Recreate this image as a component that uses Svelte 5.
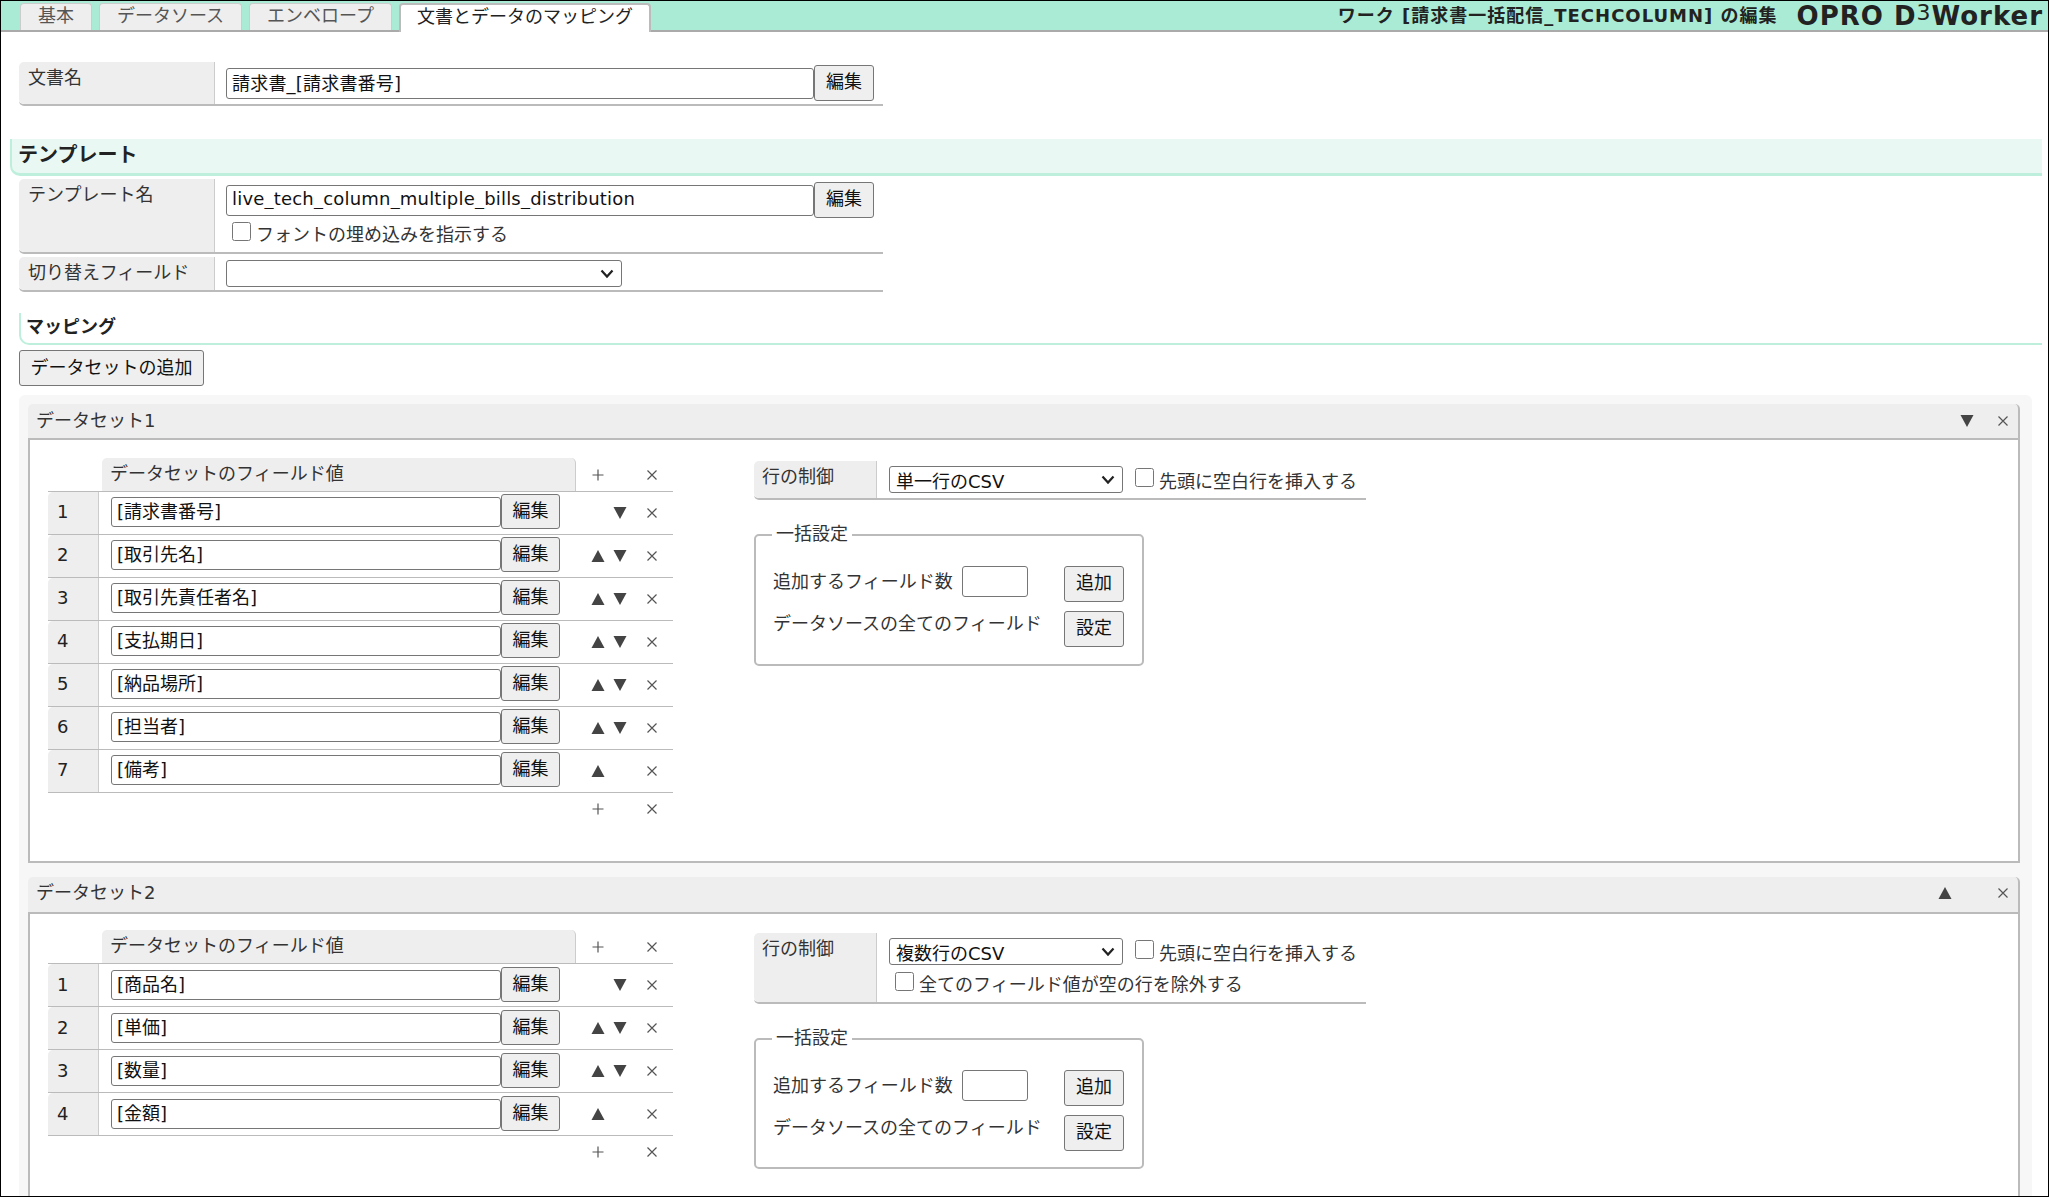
<script>
  const tabs = ['基本', 'データソース', 'エンベロープ', '文書とデータのマッピング'];
  const datasets = [
    { name: 'データセット1', cls: 'first', open: true, mode: '単一行のCSV', fields: ['[請求書番号]', '[取引先名]', '[取引先責任者名]', '[支払期日]', '[納品場所]', '[担当者]', '[備考]'] },
    { name: 'データセット2', cls: 'second', open: false, mode: '複数行のCSV', fields: ['[商品名]', '[単価]', '[数量]', '[金額]'] }
  ];
</script>

{#snippet up()}<svg class="ic" viewBox="0 0 14 14"><polygon points="7,1 13.5,13 0.5,13" /></svg>{/snippet}
{#snippet down()}<svg class="ic" viewBox="0 0 14 14"><polygon points="0.5,1 13.5,1 7,13" /></svg>{/snippet}
{#snippet close()}<svg class="ic" viewBox="0 0 14 14"><path class="ln" d="M2.5 2.5 11.5 11.5M11.5 2.5 2.5 11.5" /></svg>{/snippet}
{#snippet plus()}<svg class="ic" viewBox="0 0 14 14"><path class="ln" d="M7 1.5V12.5M1.5 7H12.5" /></svg>{/snippet}

<div class="frame">
  <header class="bar">
    <nav class="tabs">
      {#each tabs as t, i}
        <span class="tab" class:active={i === 3}>{t}</span>
      {/each}
    </nav>
    <div class="title">ワーク [請求書一括配信_TECHCOLUMN] の編集</div>
    <div class="logo">OPRO D<sup>3</sup>Worker</div>
  </header>

  <section class="row doc">
    <div class="label">文書名</div>
    <div class="value">
      <div class="pair"><input class="wide" value="請求書_[請求書番号]" /><button class="edit">編集</button></div>
    </div>
  </section>

  <h2 class="h-template">テンプレート</h2>

  <section class="row tpl">
    <div class="label">テンプレート名</div>
    <div class="value">
      <div class="pair"><input class="wide" value="live_tech_column_multiple_bills_distribution" /><button class="edit">編集</button></div>
      <label class="chk embed"><input type="checkbox" />フォントの埋め込みを指示する</label>
    </div>
  </section>
  <section class="row sw">
    <div class="label">切り替えフィールド</div>
    <div class="value"><select class="sw-select"><option></option></select></div>
  </section>

  <h3 class="h-mapping">マッピング</h3>
  <button class="add-set">データセットの追加</button>

  <div class="panel">
    {#each datasets as d}
      <article class="set {d.cls}">
        <div class="set-head">
          <span>{d.name}</span>
          <span class="set-tools" class:closed={!d.open}>
            {#if d.open}{@render down()}{:else}{@render up()}{/if}
            <span class="set-x">{@render close()}</span>
          </span>
        </div>
        <div class="set-body">
          <div class="fields">
            <div class="f-head">
              <div class="f-title">データセットのフィールド値</div>
              <div class="ctl"><span class="c">{@render plus()}</span><span class="c"></span><span class="c x">{@render close()}</span></div>
            </div>
            {#each d.fields as f, i}
              <div class="f-row">
                <div class="num">{i + 1}</div>
                <input class="f-input" value={f} />
                <button class="f-edit">編集</button>
                <div class="ctl">
                  <span class="c">{#if i > 0}{@render up()}{/if}</span>
                  <span class="c">{#if i < d.fields.length - 1}{@render down()}{/if}</span>
                  <span class="c x">{@render close()}</span>
                </div>
              </div>
            {/each}
            <div class="f-foot">
              <div class="ctl"><span class="c">{@render plus()}</span><span class="c"></span><span class="c x">{@render close()}</span></div>
            </div>
          </div>

          <div class="side">
            <div class="ctl-row">
              <div class="ctl-label">行の制御</div>
              <div class="ctl-value">
                <div class="ctl-line">
                  <select class="mode"><option>{d.mode}</option></select>
                  <label class="chk"><input type="checkbox" />先頭に空白行を挿入する</label>
                </div>
                {#if !d.open}
                  <label class="chk exclude"><input type="checkbox" />全てのフィールド値が空の行を除外する</label>
                {/if}
              </div>
            </div>
            <div class="bulk">
              <span class="legend">一括設定</span>
              <div class="bulk-row">
                <span class="bulk-l1">追加するフィールド数</span>
                <input class="count" />
                <button class="small">追加</button>
              </div>
              <div class="bulk-row two">
                <span class="bulk-l2">データソースの全てのフィールド</span>
                <button class="small">設定</button>
              </div>
            </div>
          </div>
        </div>
      </article>
    {/each}
  </div>
</div>

<style>
  :global(html), :global(body) { margin: 0; overflow: hidden; background: #fff; }
  .frame {
    box-sizing: border-box; width: 2049px; height: 1197px; overflow: hidden;
    border: 1px solid #000; background: #fff; color: #333;
    font: 18px/1.4 "DejaVu Sans", "Noto Sans CJK JP", sans-serif;
  }
  input, select, button { font: inherit; color: #111; box-sizing: border-box; }
  input:not([type]) { border: 1px solid #767676; border-radius: 3px; padding: 0 5px 3px; background: #fff; line-height: 24px; }
  select {
    appearance: none; border: 1px solid #767676; border-radius: 3px; padding: 2px 22px 0 6px;
    background: #fff url("data:image/svg+xml,%3Csvg xmlns='http://www.w3.org/2000/svg' width='14' height='10'%3E%3Cpath d='M1.5 1.5 7 7.5 12.5 1.5' fill='none' stroke='%23222' stroke-width='2.2'/%3E%3C/svg%3E") no-repeat right 7px center;
  }
  button { border: 1px solid #767676; border-radius: 3px; background: #efefef; padding: 0 0 2px; }

  .bar {
    box-sizing: border-box; height: 31px; display: flex; align-items: flex-end;
    background: #a9ebd4; border-bottom: 2px solid #aaa; padding-left: 19px;
  }
  .tabs { display: flex; gap: 7px; flex: 1; align-self: flex-end; }
  .tab {
    box-sizing: border-box; height: 27px; line-height: 24px; padding: 0 17px; background: #eee; color: #555;
    border: 1px solid #ccc; border-bottom: 0; border-radius: 4px 4px 0 0; white-space: nowrap;
  }
  .tab.active { background: #fff; color: #222; height: 29px; margin-bottom: -2px; border-color: #bbb; border-width: 2px 2px 0; line-height: 23px; padding: 0 16px; }
  .title { font-weight: 700; color: #222; align-self: center; margin-right: 19px; white-space: nowrap; letter-spacing: 1px; }
  .logo { font: 700 26px/30px "DejaVu Sans", sans-serif; color: #222; align-self: flex-start; margin-right: 5px; white-space: nowrap; letter-spacing: 1px; }
  .logo sup { font-size: 22px; font-weight: 400; line-height: 0; vertical-align: 5px; }

  .row { display: grid; grid-template-columns: 196px 1fr; width: 864px; margin-left: 18px; border-bottom: 2px solid #bbb; border-radius: 0 0 0 5px; box-sizing: border-box; }
  .label { background: #eee; border-right: 1px solid #ccc; padding: 3px 9px; border-radius: 5px 0 0 5px; line-height: 25px; color: #333; }
  .value { padding: 3px 0 0 11px; }
  .pair { display: flex; align-items: center; }
  .wide { width: 588px; height: 31px; letter-spacing: 0.2px; }
  .edit { width: 60px; height: 36px; }
  .doc { margin-top: 30px; height: 44px; }
  .tpl { height: 75px; }
  .sw { margin-top: 3px; height: 35px; }
  .sw-select { width: 396px; height: 27px; }
  .chk { display: inline-flex; align-items: center; gap: 5px; color: #333; white-space: nowrap; line-height: 24px; padding-top: 2px; margin-bottom: -2px; }
  .chk input { width: 19px; height: 19px; margin: 0; position: relative; top: -4px; }
  .embed { margin: 3px 0 -2px 6px; }

  .h-template {
    box-sizing: border-box; margin: 33px 0 3px 9px; width: 2032px; height: 37px; padding: 2px 0 0 6px;
    background: #e9f8f3; border-left: 2px solid #bdefdc; border-bottom: 3px solid #bdefdc; border-radius: 0 0 0 10px;
    font-size: 20px; line-height: 28px; font-weight: 700; color: #222;
  }
  .h-mapping {
    box-sizing: border-box; margin: 21px 0 5px 18px; width: 2023px; height: 32px; padding: 0 0 0 5px;
    border-left: 2px solid #bdefdc; border-bottom: 2px solid #bdefdc; border-radius: 0 0 0 10px;
    font-size: 18px; line-height: 27px; font-weight: 700; color: #222;
  }
  .add-set { display: block; margin-left: 18px; width: 185px; height: 36px; padding: 0; }

  .panel { box-sizing: border-box; margin: 9px 0 0 18px; width: 2013px; padding: 9px 12px 0 9px; background: #f7f7f7; border-radius: 6px 6px 0 0; }
  .set + .set { margin-top: 14px; }
  .set-head {
    box-sizing: border-box; height: 36px; display: flex; justify-content: space-between; align-items: center;
    background: #eee; border-bottom: 2px solid #bbb; padding: 0 8px; border-radius: 5px 5px 0 0; color: #333;
    border-right: 2px solid #bbb;
  }
  .second .set-head { height: 37px; padding-bottom: 4px; }
  .set-tools { display: flex; align-items: center; }
  .set-x { margin-left: 22px; display: flex; }
  .closed .set-x { margin-left: 44px; }
  .set-body { display: flex; gap: 81px; background: #fff; border: 2px solid #bbb; border-top: 0; padding: 18px 0 36px 18px; }
  .second .set-body { padding-top: 16px; }

  .fields { width: 625px; flex: none; }
  .f-head { display: flex; height: 34px; box-sizing: border-box; border-bottom: 1px solid #bbb; }
  .f-title { box-sizing: border-box; margin-left: 54px; width: 474px; padding: 0 8px; background: #eee; border-right: 1px solid #ccc; border-radius: 5px 5px 0 0; line-height: 31px; }
  .f-head .ctl { margin-left: 11px; }
  .f-row { display: flex; align-items: center; height: 43px; box-sizing: border-box; border-bottom: 1px solid #bbb; }
  .num { box-sizing: border-box; width: 51px; height: 42px; background: #eee; border-right: 1px solid #ccc; padding-left: 9px; line-height: 40px; border-radius: 5px 0 0 0; color: #222; }
  .second .num { line-height: 42px; }
  .f-input { width: 390px; height: 30px; margin-left: 12px; margin-top: -3px; }
  .f-edit { width: 59px; height: 35px; margin-top: -3px; }
  .second .f-input, .second .f-edit { margin-top: -1px; }
  .f-row .ctl { margin-left: 27px; }
  .f-foot { height: 32px; display: flex; }
  .f-foot .ctl { margin-left: 539px; }
  .ctl { display: flex; align-items: center; }
  .c { width: 22px; height: 22px; display: flex; align-items: center; justify-content: center; }
  .c.x { margin-left: 10px; }
  .ic { width: 14px; height: 14px; display: block; fill: #444; }
  .ln { fill: none; stroke: #555; stroke-width: 1.2; }

  .side { width: 612px; margin-top: 3px; flex: none; }
  .ctl-row { display: flex; box-sizing: border-box; border-bottom: 2px solid #bbb; min-height: 39px; border-radius: 0 0 0 5px; }
  .ctl-label { box-sizing: border-box; width: 123px; flex: none; padding: 0 8px; background: #eee; border-right: 1px solid #ccc; border-radius: 5px 0 0 5px; line-height: 31px; }
  .ctl-value { padding: 5px 0 5px 12px; }
  .second .ctl-value { padding-bottom: 7px; }
  .ctl-line { display: flex; align-items: center; gap: 12px; height: 27px; }
  .mode { width: 234px; height: 27px; }
  .exclude { margin: 6px 0 -2px 6px; display: flex; }
  .bulk { position: relative; box-sizing: border-box; width: 390px; height: 132px; margin-top: 34px; border: 2px solid #bbb; border-radius: 5px; padding: 30px 18px 0 17px; }
  .second .bulk { height: 131px; }
  .legend { position: absolute; left: 16px; top: -14px; padding: 0 4px; background: #fff; line-height: 24px; }
  .bulk-row { display: flex; align-items: flex-start; }
  .bulk-l1 { width: 189px; flex: none; line-height: 32px; white-space: nowrap; }
  .count { width: 66px; height: 31px; margin-right: 36px; }
  .small { width: 60px; height: 36px; flex: none; }
  .two { margin-top: 9px; }
  .bulk-l2 { width: 291px; flex: none; line-height: 25px; white-space: nowrap; }
</style>
